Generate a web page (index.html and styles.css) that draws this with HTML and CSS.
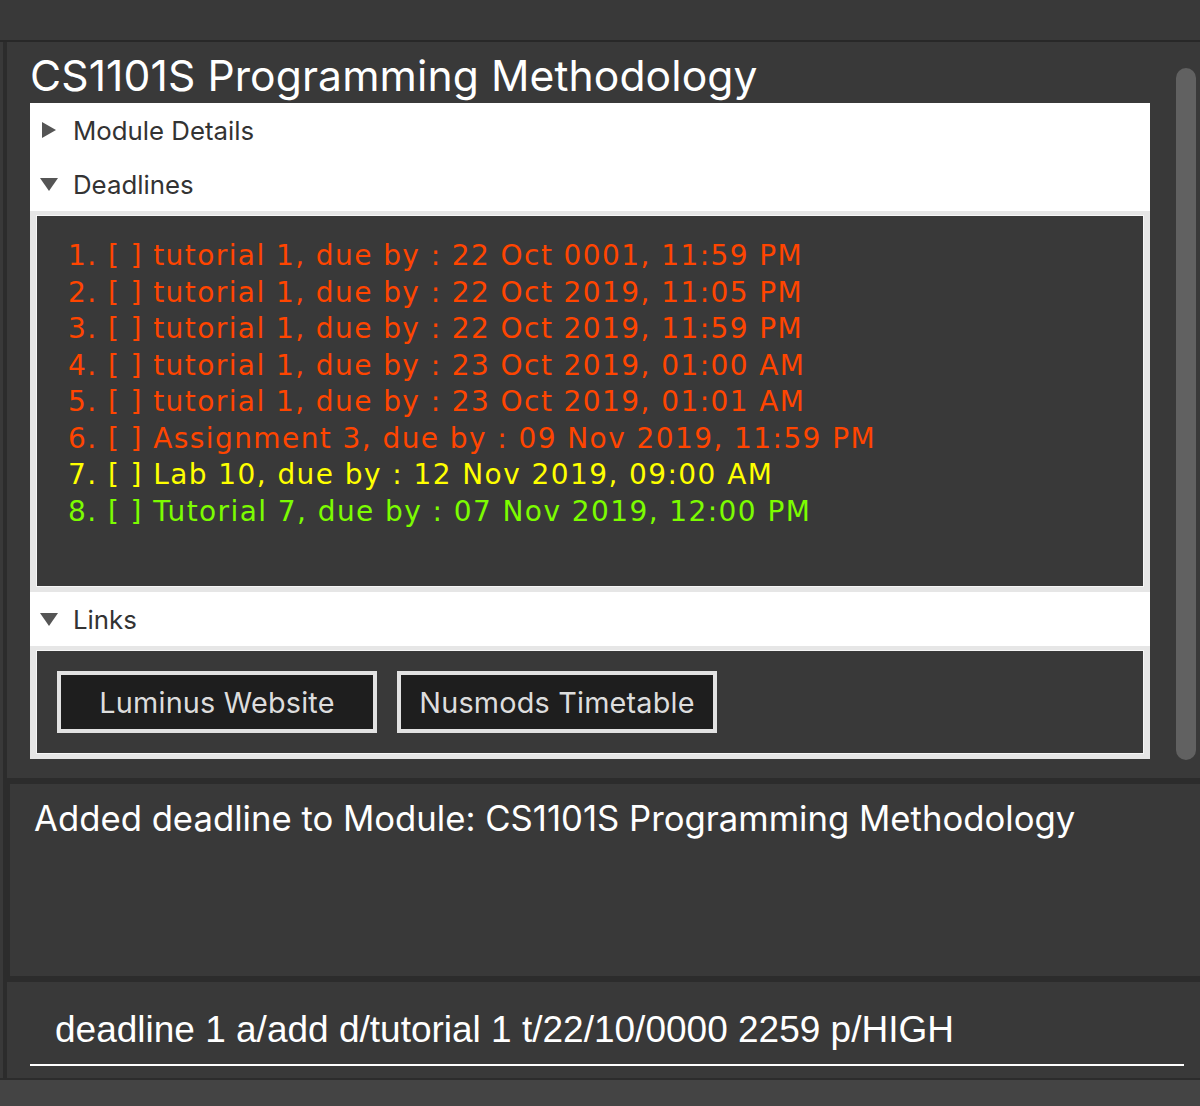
FILE: index.html
```html
<!DOCTYPE html>
<html>
<head>
<meta charset="utf-8">
<link rel="stylesheet" href="styles.css">
</head>
<body>
<div class="app">
  <div class="topbar"></div>
  <div class="area">
    <div class="module-panel">
      <div class="module-content">
        <h1 class="title">CS1101S Programming Methodology</h1>
        <div class="card">
          <div class="pane-header">
            <span class="tri tri-right"></span>
            <span class="pane-label">Module Details</span>
          </div>
          <div class="pane-header">
            <span class="tri tri-down"></span>
            <span class="pane-label">Deadlines</span>
          </div>
          <div class="pane-body deadlines">
            <div class="dl red">1. [ ] tutorial 1, due by : 22 Oct 0001, 11:59 PM</div>
            <div class="dl red">2. [ ] tutorial 1, due by : 22 Oct 2019, 11:05 PM</div>
            <div class="dl red">3. [ ] tutorial 1, due by : 22 Oct 2019, 11:59 PM</div>
            <div class="dl red">4. [ ] tutorial 1, due by : 23 Oct 2019, 01:00 AM</div>
            <div class="dl red">5. [ ] tutorial 1, due by : 23 Oct 2019, 01:01 AM</div>
            <div class="dl red">6. [ ] Assignment 3, due by : 09 Nov 2019, 11:59 PM</div>
            <div class="dl yellow">7. [ ] Lab 10, due by : 12 Nov 2019, 09:00 AM</div>
            <div class="dl green">8. [ ] Tutorial 7, due by : 07 Nov 2019, 12:00 PM</div>
          </div>
          <div class="pane-header">
            <span class="tri tri-down"></span>
            <span class="pane-label">Links</span>
          </div>
          <div class="pane-body links">
            <button class="link-btn">Luminus Website</button>
            <button class="link-btn">Nusmods Timetable</button>
          </div>
        </div>
      </div>
      <div class="scroll-track"><div class="scroll-thumb"></div></div>
    </div>
    <div class="result-panel">
      <div class="result-text">Added deadline to Module: CS1101S Programming Methodology</div>
    </div>
    <div class="command-panel">
      <div class="command-field">deadline 1 a/add d/tutorial 1 t/22/10/0000 2259 p/HIGH</div>
    </div>
  </div>
  <div class="statusbar"></div>
</div>
</body>
</html>
```
FILE: styles.css
```css
* { box-sizing: border-box; }
html, body { margin: 0; padding: 0; }
body {
  width: 1200px;
  height: 1106px;
  overflow: hidden;
  background: #393939;
  font-family: Inter, "Noto Sans", sans-serif;
}
.app { display: flex; flex-direction: column; height: 1106px; }
.topbar {
  height: 42px;
  background: #393939;
  border-bottom: 2px solid #282828;
  flex: none;
}
.area {
  flex: none;
  height: 1036px;
  background: #2c2c2c;
  border-left: 3px solid #393939;
  padding-left: 4px;
  display: flex;
  flex-direction: column;
}
.module-panel {
  height: 736px;
  background: #393939;
  display: flex;
  flex: none;
}
.module-content {
  width: 1143px;
  padding-left: 23px;
}
.title {
  margin: 0;
  height: 61px;
  padding-top: 8px;
  font-weight: 400;
  font-size: 42.6px;
  line-height: 52px;
  color: #ffffff;
  letter-spacing: 0.1px;
}
.card {
  width: 1120px;
  background: #ffffff;
}
.pane-header {
  height: 54px;
  display: flex;
  align-items: center;
  padding-left: 10px;
}
.tri { display: block; width: 0; height: 0; }
.tri-right {
  margin-left: 2px;
  border-top: 8px solid transparent;
  border-bottom: 8px solid transparent;
  border-left: 14px solid #555;
  margin-right: 17px;
}
.tri-down {
  border-left: 9px solid transparent;
  border-right: 9px solid transparent;
  border-top: 13px solid #555;
  margin-right: 15px;
}
.pane-label {
  font-size: 25.8px;
  color: #333333;
}
.pane-body {
  background: #393939;
  border-style: solid;
  border-color: #e6e6e6;
  border-width: 4px 6px 5px 6px;
  box-shadow: inset 0 0 0 1px #f6f6f6;
}
.deadlines {
  height: 381px;
  padding: 23px 0 0 32px;
  font-family: "DejaVu Sans", sans-serif;
  font-size: 28px;
  line-height: 36.5px;
  letter-spacing: 1.42px;
}
.dl { white-space: nowrap; }
.red { color: #ff4500; }
.yellow { color: #ffff00; }
.green { color: #7cfc00; }
.links {
  height: 113px;
  padding: 21px 0 0 21px;
  display: flex;
  gap: 20px;
  align-items: flex-start;
}
.link-btn {
  width: 320px;
  height: 62px;
  background: #1e1e1e;
  border: 4px solid #e2e2e2;
  color: #dddddd;
  font-family: Inter, "Noto Sans", sans-serif;
  font-size: 28.8px;
  padding: 0;
  letter-spacing: 0.2px;
}
.scroll-track {
  flex: 1;
  padding-top: 26px;
  display: flex;
  justify-content: flex-end;
  padding-right: 4px;
}
.scroll-thumb {
  width: 20px;
  height: 692px;
  background: #616161;
  border-radius: 10px;
}
.result-panel {
  margin-top: 6px;
  margin-left: 3px;
  height: 192px;
  background: #393939;
  padding: 14px 0 0 24px;
  flex: none;
}
.result-text {
  font-size: 34.7px;
  line-height: 40px;
  color: #ffffff;
}
.command-panel {
  margin-top: 6px;
  height: 96px;
  background: #393939;
  padding: 27px 0 0 23px;
  flex: none;
}
.command-field {
  width: 1154px;
  height: 57px;
  border-bottom: 2px solid #ffffff;
  padding-left: 25px;
  font-family: "Liberation Sans", Arial, sans-serif;
  font-size: 37px;
  line-height: 42px;
  color: #ffffff;
}
.statusbar {
  flex: none;
  height: 28px;
  background: #444444;
  border-top: 2px solid #2c2c2c;
}
```
